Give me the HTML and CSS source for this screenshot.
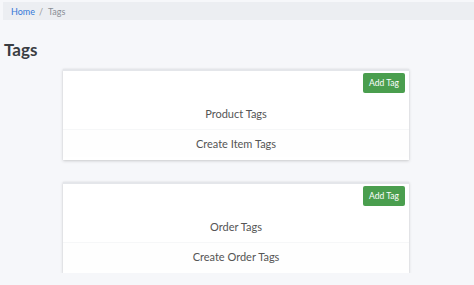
FILE: index.html
```html
<!DOCTYPE html>
<html>
<head>
<meta charset="utf-8">
<link rel="stylesheet" href="styles.css">
</head>
<body>
<nav class="breadcrumb"><a class="crumb-link" href="#">Home</a><span class="sep">/</span><span class="crumb-current">Tags</span></nav>
<h1 class="page-title">Tags</h1>
<div class="cards">
  <section class="card">
    <div class="card-head"><button class="btn-add">Add Tag</button></div>
    <div class="card-title">Product Tags</div>
    <div class="card-row">Create Item Tags</div>
  </section>
  <section class="card">
    <div class="card-head"><button class="btn-add">Add Tag</button></div>
    <div class="card-title">Order Tags</div>
    <div class="card-row">Create Order Tags</div>
  </section>
</div>
</body>
</html>
```
FILE: styles.css
```css
html, body {
  margin: 0;
  padding: 0;
  background: #f6f7fa;
  font-family: Lato, "Open Sans", sans-serif;
  color: #444;
}
body {
  padding: 2px 0 0 3px;
}
.breadcrumb {
  display: flex;
  align-items: center;
  height: 18px;
  background: #eceef2;
  padding-left: 8px;
  font-size: 9px;
  color: #8a8f96;
}
.crumb-link {
  color: #3478d8;
  text-decoration: none;
}
.sep {
  margin: 0 5px 0 4px;
  color: #999;
}
.page-title {
  margin: 18px 0 0 1px;
  font-size: 17px;
  font-weight: 700;
  color: #3a3d42;
  line-height: 23px;
}
.cards {
  display: flex;
  flex-direction: column;
  gap: 22px;
  margin: 8px 0 0 60px;
  width: 346px;
}
.card {
  background: #fff;
  border-top: 2px solid #e4e6ea;
  box-shadow: 0 1px 3px rgba(0,0,0,0.18), 0 0 1px rgba(0,0,0,0.08);
  display: flex;
  flex-direction: column;
  padding-bottom: 3px;
}
.card-head {
  display: flex;
  justify-content: flex-end;
  padding: 2px 4px 0 0;
}
.btn-add {
  background: #4a9e4e;
  color: #fff;
  border: none;
  border-radius: 2px;
  font-family: Lato, "Open Sans", sans-serif;
  font-size: 8.5px;
  width: 42px;
  height: 20px;
  padding: 0;
}
.card-title, .card-row {
  text-align: center;
  font-size: 11px;
  color: #555;
  height: 30px;
  line-height: 30px;
}
.card-title {
  margin-top: 6px;
}
.card-row {
  height: 27px;
  line-height: 27px;
  background: #fefefe;
  border-top: 1px solid #f6f7f8;
}
```
